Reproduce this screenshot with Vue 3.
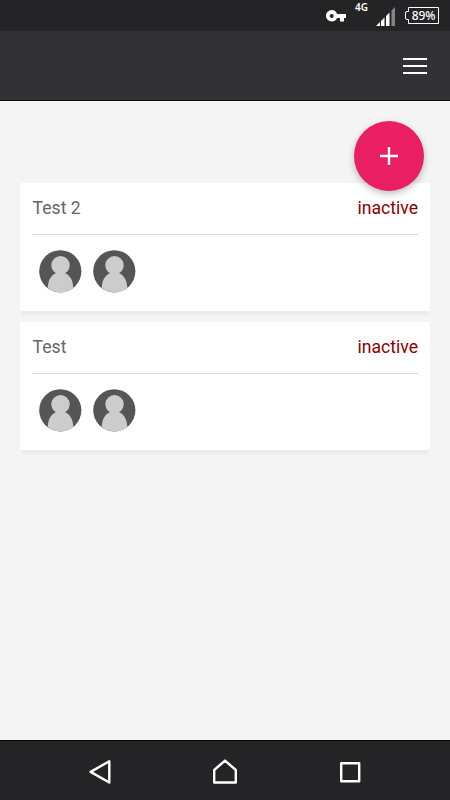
<script setup>
const groups = [
  { name: 'Test 2', status: 'inactive', members: 2 },
  { name: 'Test', status: 'inactive', members: 2 },
]
</script>

<template>
  <div class="screen">
    <div class="status">
      <svg class="key" width="20" height="12" viewBox="0 0 20 12">
        <path fill="#fff" fill-rule="evenodd" d="M5.7 0C8.2 0 10.3 1.600 11.100 3.900H20V8H18V11.500H14V8H11.100C10.300 10.200 8.200 11.500 5.700 11.500A5.750 5.750 0 0 1 5.700 0ZM5.700 3.900A2 2 0 1 0 5.700 7.900A2 2 0 1 0 5.700 3.900Z" />
      </svg>
      <span class="net">4G</span>
      <svg class="signal" width="20" height="20" viewBox="0 0 20 20">
        <path fill="#858587" d="M15.500 3.500L19 0V19H15.500Z" />
        <path fill="#fff" d="M0 19L4 15V19ZM5 14L8.500 10.500V19H5ZM10 9L13.500 5.500V19H10Z" />
      </svg>
      <div class="battery">
        <svg width="34" height="18" viewBox="0 0 34 18">
          <path fill="none" stroke="#fff" d="M3.500 .5H33.500V16.500H3.500V12.500H2Q.5 12.500 .5 11V6Q.5 4.500 2 4.500H3.500Z" />
        </svg>
        <span>89%</span>
      </div>
    </div>
    <header class="appbar">
      <div class="burger"><i></i><i></i><i></i></div>
    </header>
    <main class="content">
      <button class="fab" aria-label="Add">
        <svg width="18" height="18" viewBox="0 0 18 18"><path d="M9 0V18M0 9H18" stroke="#fff" stroke-width="2.400" /></svg>
      </button>
      <section v-for="g in groups" :key="g.name" class="card">
        <div class="head">
          <span>{{ g.name }}</span>
          <span class="state">{{ g.status }}</span>
        </div>
        <div class="members">
          <svg v-for="m in g.members" :key="m" class="avatar" width="43" height="43" viewBox="0 0 43 43">
            <circle cx="21.300" cy="21.300" r="21.100" fill="#555" />
            <circle cx="21.500" cy="15.200" r="9.200" fill="#ccc" />
            <path fill="#ccc" d="M16.500 23.300Q21.500 21.500 26.500 23.300C31 25.500 34 30.500 34.300 37.900Q28.500 42.400 21.300 42.400Q14.100 42.400 8.700 38C9 30.500 12 25.500 16.500 23.300Z" />
          </svg>
        </div>
      </section>
    </main>
    <nav class="navbar">
      <svg width="22" height="26" viewBox="0 0 22 26"><path d="M20.300 2.300V23.500L1.600 12.900Z" /></svg>
      <svg width="26" height="26" viewBox="0 0 26 26"><path d="M2.200 23.500V11L13 1.600L23.800 11V23.500Z" /></svg>
      <svg width="22" height="22" viewBox="0 0 22 22"><path d="M2.200 2.200H20.200V20.200H2.200Z" /></svg>
    </nav>
  </div>
</template>

<style>
body { margin: 0; }
</style>

<style scoped>
.screen {
  width: 450px;
  height: 800px;
  display: flex;
  flex-direction: column;
  background: #f4f4f4;
  font-family: Roboto, sans-serif;
  overflow: hidden;
}
.status {
  height: 31px;
  box-sizing: border-box;
  background: #242426;
  color: #fff;
  display: flex;
  align-items: flex-start;
  justify-content: flex-end;
  padding-right: 11px;
}
.key { margin: 10px 9px 0 0; }
.net { font: 600 10px/12px "Noto Sans", sans-serif; margin-top: 1px; width: 21px; }
.signal { margin: 7px 9px 0 0; }
.battery { display: grid; margin-top: 7px; width: 34px; }
.battery svg, .battery span { grid-area: 1 / 1; }
.battery span {
  font: 500 12px/17px "Noto Sans", sans-serif;
  text-align: center;
  padding-left: 3px;
  white-space: nowrap;
  letter-spacing: -.2px;
}
.appbar {
  height: 70px;
  box-sizing: border-box;
  background: #323135;
  border-bottom: 1px solid #0b0b0d;
  display: flex;
  justify-content: flex-end;
  padding: 27px 23px 0 0;
}
.burger { width: 24px; display: flex; flex-direction: column; gap: 4.500px; }
.burger i { height: 2.300px; background: #fff; }
.content {
  flex: 1;
  display: flex;
  flex-direction: column;
  padding: 20.400px 20px 0;
}
.fab {
  align-self: flex-end;
  flex: none;
  position: relative;
  z-index: 1;
  width: 70px;
  height: 70px;
  margin: 0 6.300px -9.800px 0;
  padding: 0 0 1px;
  border: 0;
  border-radius: 50%;
  background: #e91e63;
  display: grid;
  place-items: center;
  box-shadow: 0 3px 7px rgba(0, 0, 0, .25);
}
.card {
  flex: none;
  height: 128px;
  box-sizing: border-box;
  margin-top: 1px;
  margin-bottom: 10px;
  padding: 0 12px;
  background: #fff;
  border-radius: 2px;
  box-shadow: 0 6px 2px -2px #eaeaea;
}
.head {
  height: 52.400px;
  box-sizing: border-box;
  border-bottom: 1px solid #ddd;
  display: flex;
  justify-content: space-between;
  padding-left: .6px;
  font-size: 17.600px;
  line-height: 51.400px;
  color: #666;
}
.state { color: #8b0000; }
.members { display: flex; gap: 11px; padding: 15px 0 0 7px; }
.avatar { display: block; }
.navbar {
  height: 60px;
  box-sizing: border-box;
  flex: none;
  background: #242426;
  border-top: 1px solid #050505;
  display: grid;
  grid-template-columns: 125px 125px 125px;
  justify-content: center;
  align-items: center;
  justify-items: center;
  padding-top: 2px;
}
.navbar path { fill: none; stroke: #fff; stroke-width: 2.400; stroke-linejoin: round; }
</style>
